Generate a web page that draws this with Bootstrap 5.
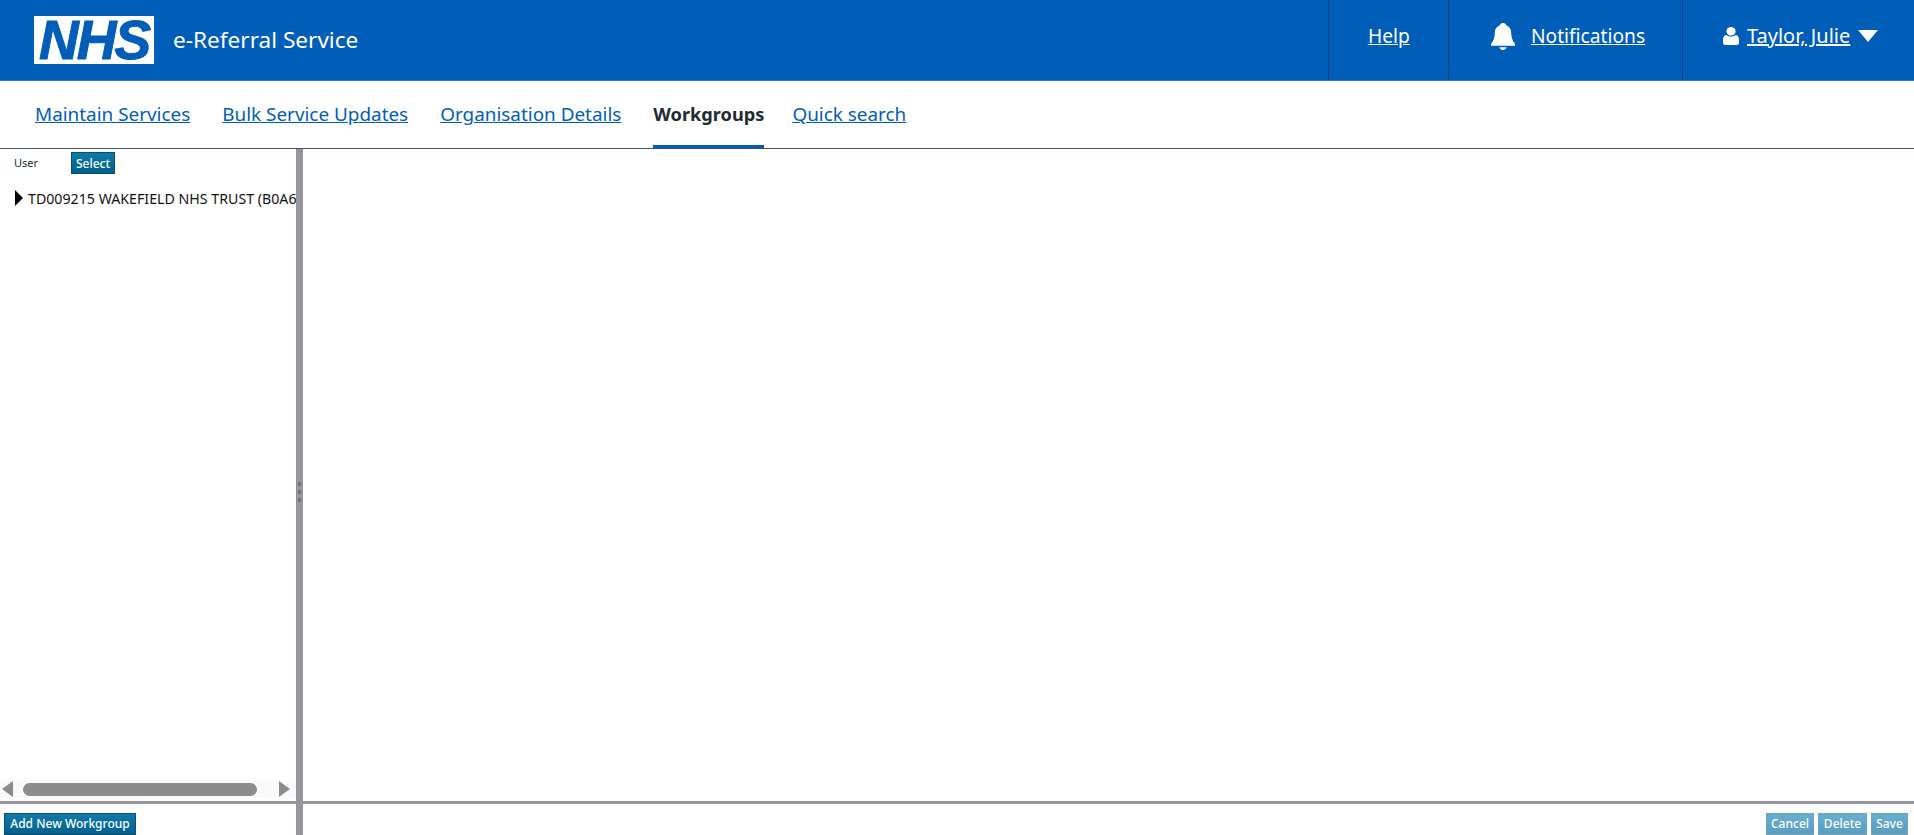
<!DOCTYPE html>
<html lang="en">
<head>
    <meta charset="UTF-8">
    <title>e-Referral Service</title>
    <link href="https://cdn.jsdelivr.net/npm/bootstrap@5.3.3/dist/css/bootstrap.min.css" rel="stylesheet">
    <style>
        html, body { height: 100%; overflow: hidden; }
        body { font-family: "Noto Sans", "Open Sans", sans-serif; color: #212b32; background: #fff; }

        .app-header { height: 81px; background: #005eb8; border-bottom: 1px solid #2f7cc6; flex: none; }
        .nhs-logo { width: 120px; height: 48px; margin-left: 34px; background: #fff; color: #005eb8; font: italic 700 55px/48px "Liberation Sans", sans-serif; letter-spacing: -2px; -webkit-text-stroke: 1px #005eb8; text-align: center; }
        .app-title { margin-left: 19px; font-size: 22.6px; color: #fff; }
        .head-item { height: 80px; padding-bottom: 8px; border-left: 1px solid #10406f; color: #fff; font-size: 19.2px; }
        .head-item a { color: #fff; }
        .head-help { width: 120px; padding-left: 39px; }
        .head-notif { width: 234px; padding-left: 42px; gap: 16px; }
        .head-user { width: 232px; padding-left: 40px; gap: 8px; font-size: 20px; }

        .app-nav { height: 68px; border-bottom: 1px solid #3f5468; flex: none; padding-left: 35px; gap: 32px; font-size: 18.9px; }
        .app-nav a { color: #005eb8; line-height: 66px; height: 67px; display: block; }
        .app-nav a.active { color: #212b32; font-weight: 700; font-size: 18.2px; margin-right: -4px; text-decoration: none; border-bottom: 3px solid #005eb8; }

        .pane-left { width: 296px; flex: none; min-height: 0; }
        .pane-split { width: 7px; flex: none; background: #96959a; }
        .pane-split i { display: block; width: 3px; height: 4px; margin: 2px auto; background: #77767b; }

        .user-label { font-size: 11px; width: 57px; margin-left: 14px; color: #212b32; }
        .tree-row { margin-top: 14px; padding-left: 15px; font-size: 14.2px; color: #111; white-space: nowrap; overflow: hidden; }
        .tree-arrow { width: 0; height: 0; border-left: 8px solid #000; border-top: 8px solid transparent; border-bottom: 8px solid transparent; margin-right: 5px; margin-top: -2px; flex: none; }

        .btn-wg { --bs-btn-padding-x: 0; --bs-btn-padding-y: 0; --bs-btn-font-size: 12px; --bs-btn-font-weight: 500; --bs-btn-border-radius: 0; --bs-btn-color: #fff; --bs-btn-border-color: #0a4f6e; --bs-btn-hover-color: #fff; height: 22px; line-height: 20px; background: linear-gradient(#0f7aa8, #00608f); }
        .btn-wg.disabled-look { background: linear-gradient(#67afd2, #5a9dbf); border-color: #6ea4bf; }
        .btn-select { width: 44px; padding-top: 1px; }
        .btn-add { width: 132px; }
        .btn-cancel { width: 48px; }
        .btn-delete { width: 49px; }
        .btn-save { width: 37px; }

        .fake-scroll { height: 18px; margin-bottom: 3px; background: #fafafa; padding: 0 6px 0 2px; flex: none; }
        .fake-scroll .arrow-l { border-right: 11px solid #8c8c8c; border-top: 8px solid transparent; border-bottom: 8px solid transparent; }
        .fake-scroll .arrow-r { border-left: 11px solid #8c8c8c; border-top: 8px solid transparent; border-bottom: 8px solid transparent; }
        .fake-scroll .thumb { width: 235px; height: 13px; background: #8c8c8c; border-radius: 7px; margin: 0 22px 0 10px; }

        .pane-foot { height: 34px; flex: none; border-top: 3px solid #96959a; }
        .pane-foot.left { padding: 9px 0 0 4px; }
        .pane-foot.right { padding: 9px 6px 0 0; gap: 4px; }
    </style>
</head>
<body>
<div class="d-flex flex-column vh-100">
    <header class="app-header d-flex align-items-center">
        <div class="nhs-logo">NHS</div>
        <div class="app-title">e-Referral Service</div>
        <div class="head-item head-help d-flex align-items-center ms-auto"><a href="#">Help</a></div>
        <div class="head-item head-notif d-flex align-items-center">
            <svg width="24" height="27" viewBox="0 0 20 25" preserveAspectRatio="none"><path fill="#fff" d="M10 0c1.600 0 2.600 1 2.800 2.400C15.700 3.500 16.700 6 16.800 9c.1 4 .8 7 3.200 10.500V21H0v-1.500C2.400 16 3.100 13 3.200 9 3.300 6 4.300 3.500 7.200 2.400 7.400 1 8.400 0 10 0z"/><path fill="#fff" d="M7 22.500h6c-.4 1.500-1.500 2.500-3 2.500s-2.600-1-3-2.500z"/></svg>
            <a href="#">Notifications</a>
        </div>
        <div class="head-item head-user d-flex align-items-center">
            <svg width="16" height="18" viewBox="0 0 14 17" preserveAspectRatio="none"><circle cx="7" cy="4" r="4" fill="#fff"/><path fill="#fff" d="M0 12c0-3 1.500-4.500 3-4.500 1 1 2.500 1.500 4 1.500s3-.5 4-1.500c1.500 0 3 1.500 3 4.500v3c0 1.200-1 2-2 2H2c-1 0-2-.8-2-2z"/></svg>
            <a href="#">Taylor, Julie</a>
            <svg width="20" height="12" viewBox="0 0 16 11" preserveAspectRatio="none"><path fill="#fff" d="M0 0h16L8 11z"/></svg>
        </div>
    </header>

    <nav class="app-nav d-flex">
        <a href="#">Maintain Services</a>
        <a href="#">Bulk Service Updates</a>
        <a href="#">Organisation Details</a>
        <a href="#" class="active">Workgroups</a>
        <a href="#">Quick search</a>
    </nav>

    <div class="d-flex flex-grow-1" style="min-height:0">
        <div class="pane-left d-flex flex-column">
            <div class="flex-grow-1 overflow-hidden">
                <div class="d-flex align-items-center" style="padding-top:3px">
                    <span class="user-label">User</span>
                    <button class="btn btn-wg btn-select" type="button">Select</button>
                </div>
                <div class="tree-row d-flex align-items-center"><span class="tree-arrow"></span>TD009215 WAKEFIELD NHS TRUST (B0A6</div>
            </div>
            <div class="fake-scroll d-flex align-items-center">
                <span class="arrow-l"></span><span class="thumb"></span><span class="arrow-r"></span>
            </div>
            <div class="pane-foot left d-flex align-items-start"><button class="btn btn-wg btn-add" type="button">Add New Workgroup</button></div>
        </div>
        <div class="pane-split d-flex flex-column justify-content-center"><i></i><i></i><i></i></div>
        <div class="d-flex flex-column flex-grow-1">
            <div class="flex-grow-1"></div>
            <div class="pane-foot right d-flex justify-content-end align-items-start">
                <button class="btn btn-wg btn-cancel disabled-look" type="button">Cancel</button>
                <button class="btn btn-wg btn-delete disabled-look" type="button">Delete</button>
                <button class="btn btn-wg btn-save disabled-look" type="button">Save</button>
            </div>
        </div>
    </div>
</div>
<script src="https://cdn.jsdelivr.net/npm/bootstrap@5.3.3/dist/js/bootstrap.bundle.min.js"></script>
</body>
</html>
